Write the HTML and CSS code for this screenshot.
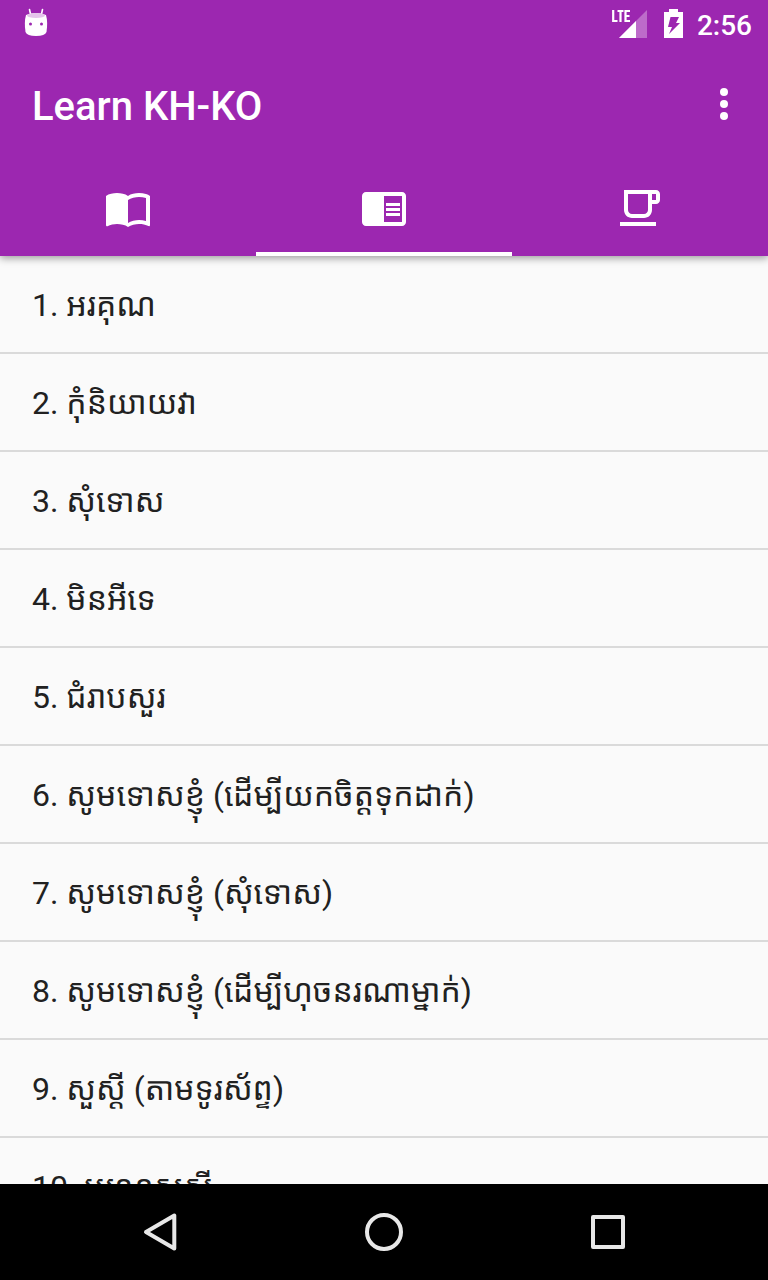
FILE: index.html
```html
<!DOCTYPE html>
<html lang="km">
<head>
<meta charset="utf-8">
<meta name="viewport" content="width=device-width, initial-scale=1">
<title>Learn KH-KO</title>
<link rel="stylesheet" href="styles.css">
</head>
<body>
<div class="app">
  <header class="header">
    <div class="status">
      <svg width="24" height="32" viewBox="0 0 24 32" aria-hidden="true">
        <path d="M5.500 1.500 6.500 6M18.500 1.500 17.500 6" stroke="#fff" stroke-width="1.600" fill="none" stroke-linecap="round"/>
        <path d="M2 7Q12 3 22 7Q24 14 22.500 24Q21 28 12 28Q3 28 1.500 24Q0 14 2 7Z" fill="#fff"/>
        <ellipse cx="12" cy="7.500" rx="9" ry="2.500" fill="#e5c4eb"/>
        <circle cx="6.500" cy="16" r="1.500" fill="#9c27b0"/><circle cx="17.500" cy="16" r="1.500" fill="#9c27b0"/>
      </svg>
      <div class="status-right">
        <svg width="38" height="30" viewBox="0 0 38 30" role="img" aria-label="LTE">
          <path d="M35 1V29H7Z" fill="#bd6bca"/>
          <path d="M24 12V29H7Z" fill="#fff"/>
          <path d="M1.200 1V12H5.500M5.500 2H11.500M8.500 2V13M18 2H13.500V12H18M13.500 7H17.500" fill="none" stroke="#fff" stroke-width="2.200"/>
        </svg>
        <svg width="19" height="30" viewBox="0 0 19 30" role="img" aria-label="Battery charging">
          <path d="M5 0H14V3H19V29H0V3H5Z" fill="#fff"/>
          <path d="M6.500 8H15L12 14H16L5 25L8 18H4Z" fill="#9c27b0"/>
        </svg>
        <time class="clock">2:56</time>
      </div>
    </div>
    <div class="toolbar">
      <h1 class="title">Learn KH-KO</h1>
      <button class="more" type="button" aria-label="More options">
        <svg width="48" height="48" viewBox="0 0 24 24" fill="currentColor"><circle cx="12" cy="6" r="2"/><circle cx="12" cy="12" r="2"/><circle cx="12" cy="18" r="2"/></svg>
      </button>
    </div>
    <nav class="tabs">
      <button class="tab" type="button" aria-label="Dictionary">
        <svg width="48" height="48" viewBox="0 0 24 24" fill="currentColor"><path d="M21 5c-1.110-.350-2.330-.500-3.500-.500-1.950 0-4.050.400-5.500 1.500-1.450-1.100-3.550-1.500-5.500-1.500S2.450 4.900 1 6v14.650c0 .250.250.500.500.500.100 0 .150-.050.250-.050C3.100 20.450 5.050 20 6.500 20c1.950 0 4.050.400 5.500 1.500 1.350-.850 3.800-1.500 5.500-1.500 1.650 0 3.350.300 4.750 1.050.100.050.150.050.250.050.250 0 .500-.250.500-.500V6c-.600-.450-1.250-.750-2-1zm0 13.500c-1.100-.350-2.300-.500-3.500-.500-1.700 0-4.150.650-5.500 1.500V8c1.350-.850 3.800-1.500 5.500-1.500 1.200 0 2.400.150 3.500.500v11.500z"/></svg>
      </button>
      <button class="tab tab-active" type="button" aria-label="Phrases">
        <svg width="48" height="48" viewBox="0 0 24 24" fill="currentColor"><path d="M13 12h7v1.500h-7zm0-2.500h7V11h-7zm0 5h7V16h-7zM21 4H3c-1.100 0-2 .900-2 2v13c0 1.100.900 2 2 2h18c1.100 0 2-.900 2-2V6c0-1.100-.900-2-2-2zm0 15h-9V6h9v13z"/></svg>
      </button>
      <button class="tab" type="button" aria-label="Break">
        <svg width="48" height="48" viewBox="0 0 24 24" fill="currentColor"><path d="M20 3H4v10c0 2.210 1.790 4 4 4h6c2.210 0 4-1.790 4-4v-3h2c1.110 0 2-.890 2-2V5c0-1.110-.890-2-2-2zm-4 10c0 1.100-.900 2-2 2H8c-1.100 0-2-.900-2-2V5h10v8zm4-5h-2V5h2v3zM2 19h18v2H2z"/></svg>
      </button>
    </nav>
  </header>
  <main class="content">
    <ul class="list">
      <li class="row">1. អរគុណ</li>
      <li class="row">2. កុំនិយាយវា</li>
      <li class="row">3. សុំទោស</li>
      <li class="row">4. មិនអីទេ</li>
      <li class="row">5. ជំរាបសួរ</li>
      <li class="row">6. សូមទោសខ្ញុំ (ដើម្បីយកចិត្តទុកដាក់)</li>
      <li class="row">7. សូមទោសខ្ញុំ (សុំទោស)</li>
      <li class="row">8. សូមទោសខ្ញុំ (ដើម្បីហុចនរណាម្នាក់)</li>
      <li class="row">9. សួស្តី (តាមទូរស័ព្ទ)</li>
      <li class="row">10. អរុណសួស្តី</li>
    </ul>
  </main>
  <footer class="navbar">
    <button class="nav" type="button" aria-label="Back">
      <svg width="48" height="48" viewBox="0 0 48 48"><path d="M38.300 7.500V40.500L10 24Z"/></svg>
    </button>
    <button class="nav" type="button" aria-label="Home">
      <svg width="48" height="48" viewBox="0 0 48 48"><circle cx="24" cy="24" r="17"/></svg>
    </button>
    <button class="nav" type="button" aria-label="Overview">
      <svg width="48" height="48" viewBox="0 0 48 48"><rect x="9" y="9" width="30" height="30"/></svg>
    </button>
  </footer>
</div>
</body>
</html>
```
FILE: styles.css
```css
* { box-sizing: border-box; }

body {
  margin: 0;
  font-family: Roboto, "Noto Sans Khmer", "Noto Sans", sans-serif;
  color: #212121;
  background: #fafafa;
}

button {
  display: flex;
  align-items: center;
  justify-content: center;
  padding: 0;
  border: 0;
  background: none;
  color: inherit;
}

svg { display: block; }

.app {
  display: flex;
  flex-direction: column;
  height: 100vh;
}

.header {
  z-index: 1;
  background: #9c27b0;
  color: #fff;
  box-shadow: 0 2px 8px rgba(0, 0, 0, 0.4);
}

.status {
  display: flex;
  align-items: center;
  justify-content: space-between;
  height: 48px;
  padding: 0 16px 0 24px;
}

.status-right {
  display: flex;
  align-items: center;
  gap: 14px;
}

.clock {
  padding-top: 4px;
  font-size: 28px;
  font-weight: 500;
  line-height: 36px;
}

.toolbar {
  display: flex;
  align-items: center;
  justify-content: space-between;
  height: 112px;
  padding: 0 20px 0 32px;
}

.title {
  margin: 0;
  padding-top: 6px;
  font-size: 40px;
  font-weight: 500;
  line-height: 48px;
}

.tabs { display: flex; }

.tab {
  flex: 1;
  height: 96px;
  border-top: 4px solid transparent;
  border-bottom: 4px solid transparent;
}

.tab-active { border-bottom-color: #fff; }

.content {
  flex: 1;
  min-height: 0;
  overflow: hidden;
}

.list {
  margin: 0;
  padding: 0;
  list-style: none;
}

.row {
  display: flex;
  align-items: center;
  height: 98px;
  padding: 2px 32px 0;
  border-bottom: 2px solid #dadada;
  font-size: 32px;
  line-height: 48px;
}

.navbar {
  display: flex;
  justify-content: center;
  height: 96px;
  background: #000;
}

.nav {
  width: 224px;
  fill: none;
  stroke: #e8e8e8;
  stroke-width: 4;
  stroke-linejoin: round;
}
```
